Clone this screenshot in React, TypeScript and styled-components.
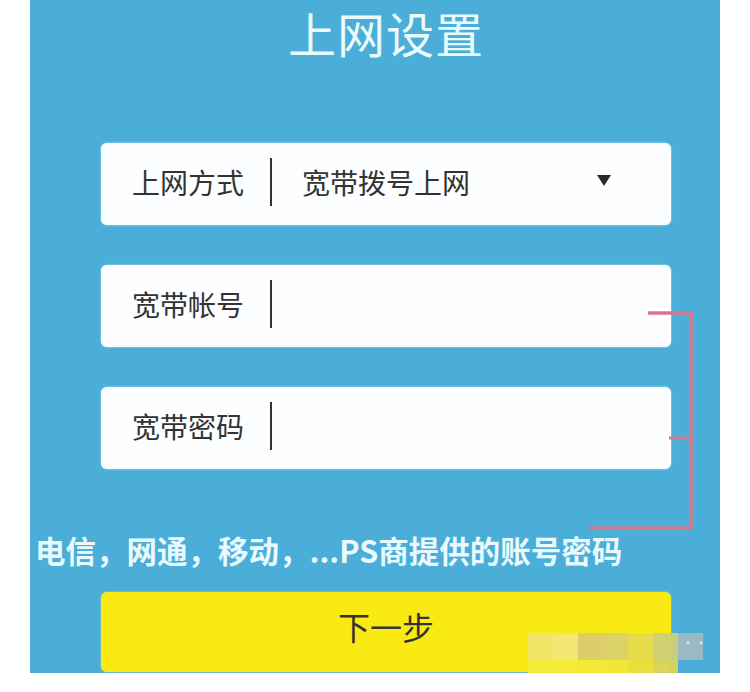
import styled, { createGlobalStyle } from "styled-components";

const GlobalStyle = createGlobalStyle`
  html, body {
    margin: 0;
    padding: 0;
    background: #ffffff;
  }
  body {
    font-family: "Noto Sans CJK SC", "Noto Sans", sans-serif;
  }
`;

const Screen = styled.div`
  position: relative;
  width: 690px;
  height: 673px;
  margin-left: 30px;
  background: #4aaed9;
  display: flex;
  flex-direction: column;
  overflow: hidden;
`;

const Title = styled.h1`
  margin: 0;
  padding: 0 0 0 22px;
  line-height: 64px;
  text-align: center;
  font-size: 48px;
  font-weight: 400;
  letter-spacing: 1px;
  color: #e9fbfb;
`;

const Form = styled.div`
  display: flex;
  flex-direction: column;
  gap: 40px;
  margin: 79px 49px 0 71px;
`;

const Field = styled.div`
  display: flex;
  align-items: center;
  height: 82px;
  box-sizing: border-box;
  padding: 0 30px 4px 31px;
  background: #fdfeff;
  border-radius: 6px;
  box-shadow: 0 0 2px rgba(220, 250, 255, 0.9);
`;

const Label = styled.span`
  font-size: 28px;
  color: #333;
  width: 138px;
  white-space: nowrap;
`;

const Divider = styled.span`
  width: 2px;
  height: 48px;
  background: #333;
  margin-right: 30px;
`;

const Value = styled.span`
  flex: 1;
  font-size: 28px;
  color: #333;
  white-space: nowrap;
`;

const Caret = styled.svg`
  width: 14px;
  height: 11px;
  margin-right: 30px;
  margin-top: -4px;
`;

const Hint = styled.p`
  margin: 61px 0 0 5px;
  height: 40px;
  line-height: 40px;
  font-size: 30.5px;
  font-weight: 700;
  color: #e8fafd;
  white-space: nowrap;
`;

const NextButton = styled.button`
  margin: 22px 49px 0 71px;
  height: 80px;
  border: none;
  border-radius: 6px;
  background: #f9ea14;
  box-shadow: 0 0 2px #cfe38a;
  font-family: inherit;
  font-size: 32px;
  color: #333;
  padding: 0 0 12px;
`;

const Bracket = styled.svg`
  position: absolute;
  left: 0;
  top: 0;
  width: 690px;
  height: 673px;
  pointer-events: none;
`;

const Mosaic = styled.div`
  position: absolute;
  left: 498px;
  top: 633px;
  display: grid;
  grid-template-columns: repeat(7, 25px);
  grid-template-rows: 27px 13px;
  opacity: 0.95;
`;

const Tile = styled.span<{ tone: string }>`
  background: ${(p) => p.tone};
`;

const Dots = styled.span`
  position: absolute;
  left: 652px;
  top: 634px;
  font-size: 12px;
  color: #dcefff;
  letter-spacing: 1px;
`;

const tiles = [
  "#f1e56c", "#f3e77a", "#dacd6f", "#dbd06e", "#e6dc4c", "#cdd078", "#9fbac2",
  "#f5ea38", "#f6ec3a", "#f4e935", "#f2e73a", "#eade40", "#d9d35c", "#4aaed9",
];

export default function App() {
  return (
    <>
      <GlobalStyle />
      <Screen>
        <Title>上网设置</Title>
        <Form>
          <Field>
            <Label>上网方式</Label>
            <Divider />
            <Value>宽带拨号上网</Value>
            <Caret viewBox="0 0 14 11">
              <path d="M0 0 H14 L7 11 Z" fill="#2b2b2b" />
            </Caret>
          </Field>
          <Field>
            <Label>宽带帐号</Label>
            <Divider />
            <Value />
          </Field>
          <Field>
            <Label>宽带密码</Label>
            <Divider />
            <Value />
          </Field>
        </Form>
        <Hint>电信，网通，移动，...PS商提供的账号密码</Hint>
        <NextButton>下一步</NextButton>

        <Bracket viewBox="0 0 690 673">
          <g stroke="#d6788a" strokeWidth="3.5" fill="none" strokeLinejoin="round">
            <path d="M618 313 H661 V528 H560" />
            <path d="M639 438 H661" strokeWidth="3" />
          </g>
        </Bracket>
        <Mosaic>
          {tiles.map((t, i) => (
            <Tile key={i} tone={t} />
          ))}
        </Mosaic>
        <Dots>··</Dots>
      </Screen>
    </>
  );
}
